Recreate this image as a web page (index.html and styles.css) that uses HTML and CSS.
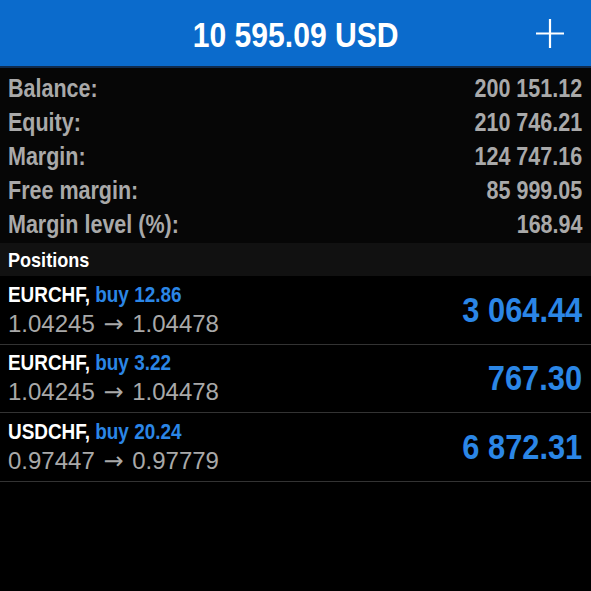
FILE: index.html
```html
<!DOCTYPE html>
<html lang="en">
<head>
    <meta charset="UTF-8">
    <meta name="viewport" content="width=device-width, initial-scale=1.0">
    <title>Trade</title>
    <link rel="stylesheet" href="styles.css">
</head>
<body>
    <div class="topbar">
        <div></div>
        <div class="balance-title"><span class="cond mid">10 595.09 USD</span></div>
        <div class="add-btn">
            <svg width="28" height="29" viewBox="0 0 28 29">
                <path d="M14 0 V29 M0 14.5 H28" stroke="#fff" stroke-width="2.2" fill="none"/>
            </svg>
        </div>
    </div>

    <div class="summary">
        <div class="summary-row"><span class="cond">Balance:</span><span class="cond end">200 151.12</span></div>
        <div class="summary-row"><span class="cond">Equity:</span><span class="cond end">210 746.21</span></div>
        <div class="summary-row"><span class="cond">Margin:</span><span class="cond end">124 747.16</span></div>
        <div class="summary-row"><span class="cond">Free margin:</span><span class="cond end">85 999.05</span></div>
        <div class="summary-row"><span class="cond">Margin level (%):</span><span class="cond end">168.94</span></div>
    </div>

    <div class="section-head"><span class="cond">Positions</span></div>

    <div class="position">
        <div class="pos-info">
            <div class="pos-title"><span class="cond">EURCHF, <span class="buy">buy 12.86</span></span></div>
            <div class="pos-price">1.04245 <span class="arrow">→</span> 1.04478</div>
        </div>
        <div class="pos-profit"><span class="cond end">3 064.44</span></div>
    </div>
    <div class="position">
        <div class="pos-info">
            <div class="pos-title"><span class="cond">EURCHF, <span class="buy">buy 3.22</span></span></div>
            <div class="pos-price">1.04245 <span class="arrow">→</span> 1.04478</div>
        </div>
        <div class="pos-profit"><span class="cond end">767.30</span></div>
    </div>
    <div class="position">
        <div class="pos-info">
            <div class="pos-title"><span class="cond">USDCHF, <span class="buy">buy 20.24</span></span></div>
            <div class="pos-price">0.97447 <span class="arrow">→</span> 0.97779</div>
        </div>
        <div class="pos-profit"><span class="cond end">6 872.31</span></div>
    </div>
</body>
</html>
```

FILE: styles.css
```css
body {
    margin: 0;
    padding: 0;
    background-color: #000;
    font-family: "Liberation Sans", Arial, sans-serif;
    width: 591px;
    height: 591px;
    overflow: hidden;
}
/* narrow the bold face to look like a condensed font */
.cond {
    display: inline-block;
    white-space: nowrap;
    transform: scaleX(0.86);
    transform-origin: left center;
}
.cond.end {
    transform-origin: right center;
}
.cond.mid {
    transform-origin: center center;
}
.topbar {
    height: 66px;
    background-color: #0b6bcc;
    border-bottom: 2px solid #0f2a4c;
    display: grid;
    grid-template-columns: 1fr auto 1fr;
    align-items: center;
}
.balance-title {
    color: #fff;
    font-size: 35px;
    font-weight: bold;
    padding-top: 3px;
}
.add-btn {
    justify-self: end;
    padding-right: 27px;
    display: flex;
}
.summary {
    background-color: #060606;
    padding: 3px 9px 2px 8px;
}
.summary-row {
    height: 34px;
    display: flex;
    justify-content: space-between;
    align-items: center;
    color: #a9a9a9;
    font-size: 25px;
    font-weight: bold;
}
.section-head {
    height: 33px;
    background-color: #111;
    color: #fff;
    font-size: 21px;
    font-weight: bold;
    padding-left: 8px;
    display: flex;
    align-items: center;
}
.position {
    height: 67.5px;
    border-bottom: 1px solid #333;
    display: flex;
    justify-content: space-between;
    align-items: center;
    padding: 0 9px 0 8px;
}
.pos-title {
    color: #fff;
    font-size: 22px;
    font-weight: bold;
    line-height: 28px;
}
.buy {
    color: #2b86e6;
}
.pos-price {
    color: #a9a9a9;
    font-size: 24px;
    line-height: 30px;
}
.arrow {
    font-family: "DejaVu Sans", sans-serif;
    font-size: 24px;
    margin: 0 2px;
}
.pos-profit {
    color: #2b86e6;
    font-size: 35px;
    font-weight: bold;
}
.pos-profit .cond {
    transform: scaleX(0.88);
}
```
